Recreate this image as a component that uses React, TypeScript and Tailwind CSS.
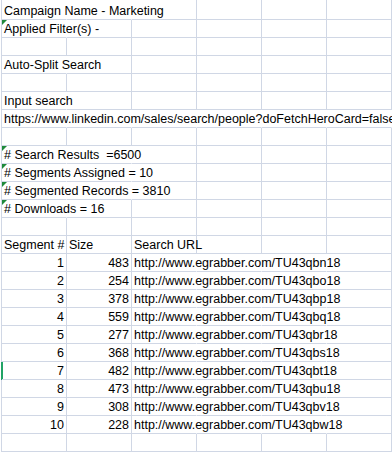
import React from 'react'

type Cell = { text: string; right?: boolean }

interface Row {
  cells?: Record<number, Cell>
  hidden?: number[]
  flag?: boolean
  active?: boolean
  first?: boolean
}

const t = (text: string): Cell => ({ text })
const r = (text: string): Cell => ({ text, right: true })

const sizes = [483, 254, 378, 559, 277, 368, 482, 473, 308, 228]
const codes = ['n', 'o', 'p', 'q', 'r', 's', 't', 'u', 'v', 'w']

const rows: Row[] = [
  { cells: { 0: t('Campaign Name - Marketing') }, hidden: [0, 1], first: true },
  { cells: { 0: t('Applied Filter(s) -') }, hidden: [0], flag: true },
  {},
  { cells: { 0: t('Auto-Split Search') }, hidden: [0] },
  {},
  { cells: { 0: t('Input search') }, hidden: [0] },
  {
    cells: { 0: t('https://www.linkedin.com/sales/search/people?doFetchHeroCard=false&query=marketing') },
    hidden: [0, 1, 2, 3, 4, 5],
  },
  {},
  { cells: { 0: t('# Search Results  =6500') }, hidden: [0, 1], flag: true },
  { cells: { 0: t('# Segments Assigned = 10') }, hidden: [0, 1], flag: true },
  { cells: { 0: t('# Segmented Records = 3810') }, hidden: [0, 1], flag: true },
  { cells: { 0: t('# Downloads = 16') }, hidden: [0], flag: true },
  {},
  { cells: { 0: t('Segment #'), 1: t('Size'), 2: t('Search URL') } },
  ...sizes.map((size, i) => ({
    cells: {
      0: r(String(i + 1)),
      1: r(String(size)),
      2: t(`http://www.egrabber.com/TU43qb${codes[i]}18`),
    },
    hidden: [2, 3, 4],
    active: i === 6,
  })),
  {},
]

function SheetRow({ row }: { row: Row }) {
  return (
    <div className={`relative flex ${row.first ? 'h-[20px]' : 'h-[18px]'}`}>
      {row.active && <div className="absolute -left-px top-0 h-[18px] w-[2px] bg-[#21a366]" />}
      {[0, 1, 2, 3, 4, 5].map((col) => {
        const cell = row.cells?.[col]
        const hide = row.hidden?.includes(col)
        return (
          <div
            key={col}
            className={`relative flex h-full w-[65px] shrink-0 items-end border-b border-r border-b-[#d0d7e5] ${
              hide ? 'border-r-transparent' : 'border-r-[#d0d7e5]'
            }`}
          >
            {col === 0 && row.flag && (
              <div className="absolute left-0 top-0 h-0 w-0 border-r-[5px] border-t-[5px] border-r-transparent border-t-[#1f8a3a]" />
            )}
            {cell && (
              <span
                className={`block whitespace-pre leading-[15px] text-black ${
                  cell.right ? 'w-full pr-[2px] text-right' : 'pl-[2px]'
                }`}
              >
                {cell.text}
              </span>
            )}
          </div>
        )
      })}
    </div>
  )
}

export default function App() {
  return (
    <div className="h-[452px] w-[392px] overflow-hidden bg-white pl-px font-['Liberation_Sans',Arial,sans-serif] text-[12.5px]">
      <div className="border-l border-[#d0d7e5]">
        {rows.map((row, i) => (
          <SheetRow key={i} row={row} />
        ))}
      </div>
    </div>
  )
}
